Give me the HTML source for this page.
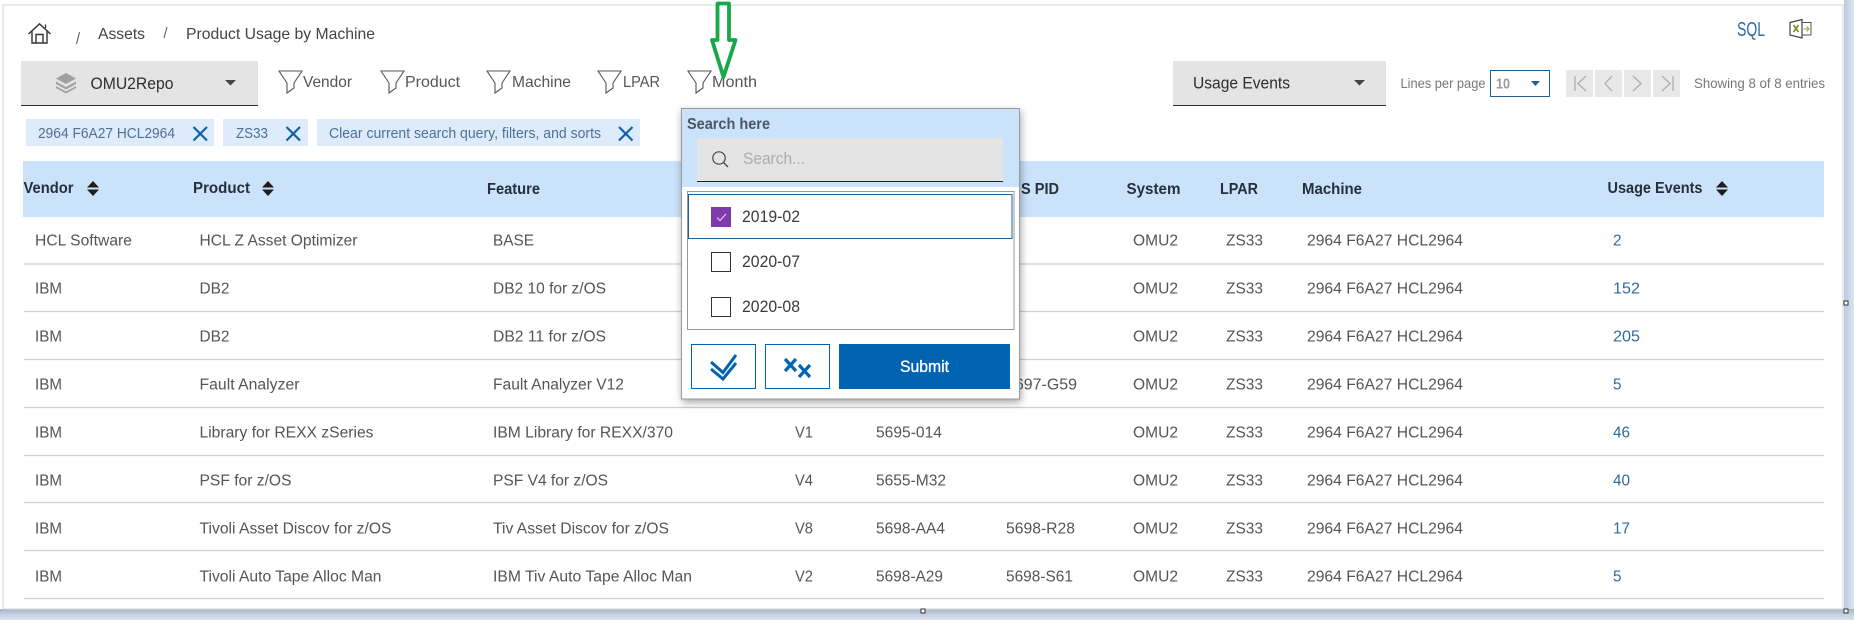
<!DOCTYPE html>
<html><head><meta charset="utf-8"><title>Product Usage by Machine</title>
<style>
html,body{margin:0;padding:0;background:#fff;width:1854px;height:620px;overflow:hidden}
svg{display:block;position:absolute;left:0;top:0}
text{font-family:"Liberation Sans",Arial,sans-serif;font-size:15.5px;fill:#555;white-space:pre}
.h{font-weight:bold;fill:#25303c;font-size:15.5px}
.n{fill:#555;font-size:16px}
.b{fill:#444;font-size:16px}
.c{fill:#4f7097;font-size:14.5px}
.l{fill:#2f6a9e}
.m{fill:#777;font-size:14px}
.o{fill:#3b3b3b;font-size:16.5px}
.f{fill:none;stroke:#555;stroke-width:1.1}
.x{fill:none;stroke:#0f62a8;stroke-width:2.2}
.p{fill:none;stroke:#aaa;stroke-width:1.2}
.r{stroke:#cfcfcf;stroke-width:1.2}
</style></head><body>
<svg width="1854" height="620" viewBox="0 0 1854 620" xmlns="http://www.w3.org/2000/svg">
<defs>
<linearGradient id="bb" x1="0" y1="0" x2="0" y2="1"><stop offset="0" stop-color="#a6b4c6"/><stop offset=".5" stop-color="#c4d0e0"/><stop offset="1" stop-color="#d9e3f2"/></linearGradient>
<linearGradient id="rb" x1="0" y1="0" x2="1" y2="0"><stop offset="0" stop-color="#bcc9dc"/><stop offset="1" stop-color="#dbe4f1"/></linearGradient>
</defs>
<rect width="1854" height="620" fill="#fff"/>
<!-- window chrome -->
<rect x="1844" y="0" width="10" height="620" fill="url(#rb)"/>
<rect x="0" y="609" width="1854" height="11" fill="url(#bb)"/>
<rect x="3" y="5" width="1840" height="604" fill="#fff" stroke="#d2d4da" stroke-width="1"/>
<rect x="921" y="609" width="4" height="4" fill="#fff" stroke="#333" stroke-width="1"/>
<rect x="1844" y="301" width="4" height="4" fill="#fff" stroke="#333" stroke-width="1"/>
<rect x="1844" y="609" width="4" height="4" fill="#fff" stroke="#333" stroke-width="1"/>

<!-- breadcrumb -->
<g fill="none" stroke="#333" stroke-width="1.4">
<path d="M28.5 34L39.5 23.8L50.5 34"/><path d="M32 31V43H47V31"/><path d="M36 43V34.5H43V43"/><path d="M45.5 28V24.5"/>
</g>
<path d="M79.5 32L76.5 44" stroke="#555" stroke-width="1"/>
<text class="b" x="98" y="39" textLength="47" lengthAdjust="spacingAndGlyphs">Assets</text>
<path d="M167 27L164 38" stroke="#555" stroke-width="1"/>
<text class="b" x="186" y="39" textLength="189" lengthAdjust="spacingAndGlyphs">Product Usage by Machine</text>

<!-- repo dropdown -->
<rect x="21" y="61" width="237" height="44" fill="#e4e4e4"/>
<rect x="21" y="105" width="237" height="1" fill="#333"/>
<g fill="#a0a0a0">
<path d="M66 73L76 78.5L66 84L56 78.5Z"/><path d="M56 81.5L66 87L76 81.5L76 84L66 89.500L56 84Z"/><path d="M56 86L66 91.500L76 86L76 88L66 93.500L56 88Z"/>
</g>
<text x="90.5" y="89" style="font-size:17px;fill:#2e2e2e" textLength="83" lengthAdjust="spacingAndGlyphs">OMU2Repo</text>
<path d="M225 80H236L230.5 85.5Z" fill="#444"/>

<!-- filters -->
<path class="f" d="M279 71H302L294 83V88L287 93V83Z"/>
<text class="n" x="303" y="87" textLength="49" lengthAdjust="spacingAndGlyphs">Vendor</text>
<path class="f" d="M381 71H404L396 83V88L389 93V83Z"/>
<text class="n" x="405" y="87" textLength="55" lengthAdjust="spacingAndGlyphs">Product</text>
<path class="f" d="M487 71H510L502 83V88L495 93V83Z"/>
<text class="n" x="512" y="87" textLength="59" lengthAdjust="spacingAndGlyphs">Machine</text>
<path class="f" d="M598 71H621L613 83V88L606 93V83Z"/>
<text class="n" x="623" y="87" textLength="37" lengthAdjust="spacingAndGlyphs">LPAR</text>
<path class="f" d="M688 71H711L703 83V88L696 93V83Z"/>
<text class="n" x="712" y="87" textLength="45" lengthAdjust="spacingAndGlyphs">Month</text>

<!-- chips -->
<rect x="26" y="119" width="188" height="27" fill="#deebfb"/>
<text class="c" x="38" y="138" textLength="137" lengthAdjust="spacingAndGlyphs">2964 F6A27 HCL2964</text>
<path class="x" d="M193.500 127L207 140.500M207 127L193.500 140.500"/>
<rect x="223" y="119" width="85" height="27" fill="#deebfb"/>
<text class="c" x="236" y="138" textLength="32" lengthAdjust="spacingAndGlyphs">ZS33</text>
<path class="x" d="M286.500 127L300 140.500M300 127L286.500 140.500"/>
<rect x="317" y="119" width="323" height="27" fill="#deebfb"/>
<text class="c" x="329" y="138" textLength="272" lengthAdjust="spacingAndGlyphs">Clear current search query, filters, and sorts</text>
<path class="x" d="M619 127L632.500 140.500M632.500 127L619 140.500"/>

<!-- right toolbar -->
<text x="1737" y="36" style="font-size:20px;fill:#2a6aa0" textLength="28" lengthAdjust="spacingAndGlyphs">SQL</text>
<g fill="none">
<path d="M1790 22.500L1802 19.500V38L1790 35Z" stroke="#444" stroke-width="1.2"/>
<path d="M1802 22.500H1811V35H1802" stroke="#555" stroke-width="1"/>
<path d="M1793.500 25L1798.500 32M1798.500 25L1793.500 32" stroke="#6f8f1f" stroke-width="1.6"/>
<path d="M1803.500 29H1809M1806.500 26.500L1809 29L1806.500 31.500" stroke="#8aa84a" stroke-width="1"/>
</g>
<rect x="1173" y="61" width="213" height="44" fill="#e4e4e4"/>
<rect x="1173" y="105" width="213" height="1" fill="#333"/>
<text x="1193" y="88.500" style="font-size:17px;fill:#2e2e2e" textLength="97" lengthAdjust="spacingAndGlyphs">Usage Events</text>
<path d="M1354 80H1365L1359.500 85.500Z" fill="#444"/>
<text class="m" x="1400.500" y="88" textLength="85" lengthAdjust="spacingAndGlyphs">Lines per page</text>
<rect x="1490.500" y="70.500" width="59" height="26" fill="#fff" stroke="#1f6193" stroke-width="1"/>
<text x="1496" y="88.500" style="font-size:15px;fill:#999;font-weight:bold" textLength="14" lengthAdjust="spacingAndGlyphs">10</text>
<path d="M1531 81H1540L1535.500 86Z" fill="#1f6193"/>
<rect x="1566" y="70" width="27" height="27" fill="#e8e8e8"/>
<rect x="1595" y="70" width="27" height="27" fill="#e8e8e8"/>
<rect x="1624" y="70" width="27" height="27" fill="#e8e8e8"/>
<rect x="1653" y="70" width="27" height="27" fill="#e8e8e8"/>
<path class="p" d="M1575 76V91M1586 76L1578 83.500L1586 91M1612 76L1605 83.500L1612 91M1633 76L1641 83.500L1633 91M1662 76L1670 83.500L1662 91M1673 76V91"/>
<text class="m" x="1694" y="88" textLength="131" lengthAdjust="spacingAndGlyphs">Showing 8 of 8 entries</text>

<!-- table header -->
<rect x="23" y="161" width="1801" height="56" fill="#cbe2fb"/>
<text class="h" x="23.500" y="193" textLength="50" lengthAdjust="spacingAndGlyphs">Vendor</text>
<path d="M93 181L99 187.500H87ZM87 189.500H99L93 196Z" fill="#1d1d1d"/>
<text class="h" x="193" y="193" textLength="57" lengthAdjust="spacingAndGlyphs">Product</text>
<path d="M268 181L274 187.500H262ZM262 189.500H274L268 196Z" fill="#1d1d1d"/>
<text class="h" x="487" y="194" textLength="53" lengthAdjust="spacingAndGlyphs">Feature</text>
<text class="h" x="1021" y="194" textLength="38" lengthAdjust="spacingAndGlyphs">S PID</text>
<text class="h" x="1126.500" y="194" textLength="54" lengthAdjust="spacingAndGlyphs">System</text>
<text class="h" x="1220" y="194" textLength="38" lengthAdjust="spacingAndGlyphs">LPAR</text>
<text class="h" x="1302" y="194" textLength="60" lengthAdjust="spacingAndGlyphs">Machine</text>
<text class="h" x="1607.500" y="193" textLength="95" lengthAdjust="spacingAndGlyphs">Usage Events</text>
<path d="M1722 181L1728 187.500H1716ZM1716 189.500H1728L1722 196Z" fill="#1d1d1d"/>

<!-- row lines -->
<path class="r" d="M24 264H1824M24 311.500H1824M24 359.500H1824M24 407.500H1824M24 455.500H1824M24 502.500H1824M24 550.500H1824M24 598.500H1824"/>

<!-- rows -->
<g transform="translate(0 .5)">
<text x="35" y="245" textLength="97" lengthAdjust="spacingAndGlyphs">HCL Software</text>
<text x="199.500" y="245" textLength="158" lengthAdjust="spacingAndGlyphs">HCL Z Asset Optimizer</text>
<text x="493" y="245" textLength="41" lengthAdjust="spacingAndGlyphs">BASE</text>
<text x="1133" y="245" textLength="45" lengthAdjust="spacingAndGlyphs">OMU2</text>
<text x="1226" y="245" textLength="37" lengthAdjust="spacingAndGlyphs">ZS33</text>
<text x="1307" y="245" textLength="156" lengthAdjust="spacingAndGlyphs">2964 F6A27 HCL2964</text>
<text class="l" x="1613" y="245" textLength="8.500" lengthAdjust="spacingAndGlyphs">2</text>

<text x="35" y="293" textLength="27" lengthAdjust="spacingAndGlyphs">IBM</text>
<text x="199.500" y="293" textLength="30" lengthAdjust="spacingAndGlyphs">DB2</text>
<text x="493" y="293" textLength="113" lengthAdjust="spacingAndGlyphs">DB2 10 for z/OS</text>
<text x="1133" y="293" textLength="45" lengthAdjust="spacingAndGlyphs">OMU2</text>
<text x="1226" y="293" textLength="37" lengthAdjust="spacingAndGlyphs">ZS33</text>
<text x="1307" y="293" textLength="156" lengthAdjust="spacingAndGlyphs">2964 F6A27 HCL2964</text>
<text class="l" x="1613" y="293" textLength="27" lengthAdjust="spacingAndGlyphs">152</text>

<text x="35" y="341" textLength="27" lengthAdjust="spacingAndGlyphs">IBM</text>
<text x="199.500" y="341" textLength="30" lengthAdjust="spacingAndGlyphs">DB2</text>
<text x="493" y="341" textLength="113" lengthAdjust="spacingAndGlyphs">DB2 11 for z/OS</text>
<text x="1133" y="341" textLength="45" lengthAdjust="spacingAndGlyphs">OMU2</text>
<text x="1226" y="341" textLength="37" lengthAdjust="spacingAndGlyphs">ZS33</text>
<text x="1307" y="341" textLength="156" lengthAdjust="spacingAndGlyphs">2964 F6A27 HCL2964</text>
<text class="l" x="1613" y="341" textLength="27" lengthAdjust="spacingAndGlyphs">205</text>

<text x="35" y="389" textLength="27" lengthAdjust="spacingAndGlyphs">IBM</text>
<text x="199.500" y="389" textLength="100" lengthAdjust="spacingAndGlyphs">Fault Analyzer</text>
<text x="493" y="389" textLength="131" lengthAdjust="spacingAndGlyphs">Fault Analyzer V12</text>
<text x="1006" y="389" textLength="71" lengthAdjust="spacingAndGlyphs">5697-G59</text>
<text x="1133" y="389" textLength="45" lengthAdjust="spacingAndGlyphs">OMU2</text>
<text x="1226" y="389" textLength="37" lengthAdjust="spacingAndGlyphs">ZS33</text>
<text x="1307" y="389" textLength="156" lengthAdjust="spacingAndGlyphs">2964 F6A27 HCL2964</text>
<text class="l" x="1613" y="389" textLength="8.500" lengthAdjust="spacingAndGlyphs">5</text>

<text x="35" y="437" textLength="27" lengthAdjust="spacingAndGlyphs">IBM</text>
<text x="199.500" y="437" textLength="174" lengthAdjust="spacingAndGlyphs">Library for REXX zSeries</text>
<text x="493" y="437" textLength="180" lengthAdjust="spacingAndGlyphs">IBM Library for REXX/370</text>
<text x="795" y="437" textLength="18" lengthAdjust="spacingAndGlyphs">V1</text>
<text x="876" y="437" textLength="66" lengthAdjust="spacingAndGlyphs">5695-014</text>
<text x="1133" y="437" textLength="45" lengthAdjust="spacingAndGlyphs">OMU2</text>
<text x="1226" y="437" textLength="37" lengthAdjust="spacingAndGlyphs">ZS33</text>
<text x="1307" y="437" textLength="156" lengthAdjust="spacingAndGlyphs">2964 F6A27 HCL2964</text>
<text class="l" x="1613" y="437" textLength="17" lengthAdjust="spacingAndGlyphs">46</text>

<text x="35" y="485" textLength="27" lengthAdjust="spacingAndGlyphs">IBM</text>
<text x="199.500" y="485" textLength="92" lengthAdjust="spacingAndGlyphs">PSF for z/OS</text>
<text x="493" y="485" textLength="115" lengthAdjust="spacingAndGlyphs">PSF V4 for z/OS</text>
<text x="795" y="485" textLength="18" lengthAdjust="spacingAndGlyphs">V4</text>
<text x="876" y="485" textLength="70" lengthAdjust="spacingAndGlyphs">5655-M32</text>
<text x="1133" y="485" textLength="45" lengthAdjust="spacingAndGlyphs">OMU2</text>
<text x="1226" y="485" textLength="37" lengthAdjust="spacingAndGlyphs">ZS33</text>
<text x="1307" y="485" textLength="156" lengthAdjust="spacingAndGlyphs">2964 F6A27 HCL2964</text>
<text class="l" x="1613" y="485" textLength="17" lengthAdjust="spacingAndGlyphs">40</text>

<text x="35" y="533" textLength="27" lengthAdjust="spacingAndGlyphs">IBM</text>
<text x="199.500" y="533" textLength="192" lengthAdjust="spacingAndGlyphs">Tivoli Asset Discov for z/OS</text>
<text x="493" y="533" textLength="176" lengthAdjust="spacingAndGlyphs">Tiv Asset Discov for z/OS</text>
<text x="795" y="533" textLength="18" lengthAdjust="spacingAndGlyphs">V8</text>
<text x="876" y="533" textLength="69" lengthAdjust="spacingAndGlyphs">5698-AA4</text>
<text x="1006" y="533" textLength="69" lengthAdjust="spacingAndGlyphs">5698-R28</text>
<text x="1133" y="533" textLength="45" lengthAdjust="spacingAndGlyphs">OMU2</text>
<text x="1226" y="533" textLength="37" lengthAdjust="spacingAndGlyphs">ZS33</text>
<text x="1307" y="533" textLength="156" lengthAdjust="spacingAndGlyphs">2964 F6A27 HCL2964</text>
<text class="l" x="1613" y="533" textLength="17" lengthAdjust="spacingAndGlyphs">17</text>

<text x="35" y="581" textLength="27" lengthAdjust="spacingAndGlyphs">IBM</text>
<text x="199.500" y="581" textLength="182" lengthAdjust="spacingAndGlyphs">Tivoli Auto Tape Alloc Man</text>
<text x="493" y="581" textLength="199" lengthAdjust="spacingAndGlyphs">IBM Tiv Auto Tape Alloc Man</text>
<text x="795" y="581" textLength="18" lengthAdjust="spacingAndGlyphs">V2</text>
<text x="876" y="581" textLength="67" lengthAdjust="spacingAndGlyphs">5698-A29</text>
<text x="1006" y="581" textLength="67" lengthAdjust="spacingAndGlyphs">5698-S61</text>
<text x="1133" y="581" textLength="45" lengthAdjust="spacingAndGlyphs">OMU2</text>
<text x="1226" y="581" textLength="37" lengthAdjust="spacingAndGlyphs">ZS33</text>
<text x="1307" y="581" textLength="156" lengthAdjust="spacingAndGlyphs">2964 F6A27 HCL2964</text>
<text class="l" x="1613" y="581" textLength="8.500" lengthAdjust="spacingAndGlyphs">5</text>
</g>

<!-- popup -->
<rect x="681.500" y="108.500" width="338" height="290.500" fill="#fff" stroke="#9a9a9a" stroke-width="1" style="filter:drop-shadow(1px 3px 4px rgba(0,0,0,.35))"/>
<rect x="682" y="109" width="337" height="78" fill="#cbe2fb"/>
<text x="687" y="129" style="font-size:16px;font-weight:bold;fill:#4b5763" textLength="83" lengthAdjust="spacingAndGlyphs">Search here</text>
<rect x="697" y="138" width="306" height="43" fill="#e4e4e4"/>
<rect x="697" y="181" width="306" height="1" fill="#222"/>
<circle cx="719" cy="158" r="6.200" fill="none" stroke="#444" stroke-width="1.200"/>
<path d="M723.500 162.500L728 167" stroke="#444" stroke-width="1.300"/>
<text x="743" y="164" style="font-size:17px;fill:#adadad" textLength="62" lengthAdjust="spacingAndGlyphs">Search...</text>
<rect x="687.500" y="191.500" width="326.500" height="138" fill="#fff" stroke="#999" stroke-width="1"/>
<rect x="688.500" y="194.500" width="323.500" height="44" fill="#fff" stroke="#1f6193" stroke-width="1"/>
<rect x="711" y="207" width="20" height="20" fill="#7f3bae"/>
<path d="M717 217.500L720 220.500L726 214" fill="none" stroke="#e6d8f2" stroke-width="1"/>
<text class="o" x="742" y="222" textLength="58" lengthAdjust="spacingAndGlyphs">2019-02</text>
<rect x="711.500" y="252.500" width="19" height="19" fill="#fff" stroke="#333" stroke-width="1"/>
<text class="o" x="742" y="267" textLength="58" lengthAdjust="spacingAndGlyphs">2020-07</text>
<rect x="711.500" y="297.500" width="19" height="19" fill="#fff" stroke="#333" stroke-width="1"/>
<text class="o" x="742" y="312" textLength="58" lengthAdjust="spacingAndGlyphs">2020-08</text>
<rect x="691.500" y="344.500" width="64" height="44" fill="#fff" stroke="#0063b1" stroke-width="1"/>
<path d="M711 362L723 372.500L736 355M711 369L723 379L736 363" fill="none" stroke="#0063b1" stroke-width="3"/>
<rect x="765.500" y="344.500" width="64" height="44" fill="#fff" stroke="#0063b1" stroke-width="1"/>
<path d="M785 359L796 371M796 359L785 371M799 365L810 377M810 365L799 377" fill="none" stroke="#0063b1" stroke-width="3.200"/>
<rect x="839" y="344" width="171" height="45" fill="#0063b1"/>
<text x="900" y="372" style="font-size:17px;fill:#fff;stroke:#fff;stroke-width:.35" textLength="49" lengthAdjust="spacingAndGlyphs">Submit</text>

<!-- green annotation arrow -->
<path d="M717.500 3.500H729V40H735.500L723.500 77L712 40H717.500Z" fill="none" stroke="#18a84a" stroke-width="3.800" stroke-linejoin="round"/>
</svg>
</body></html>
